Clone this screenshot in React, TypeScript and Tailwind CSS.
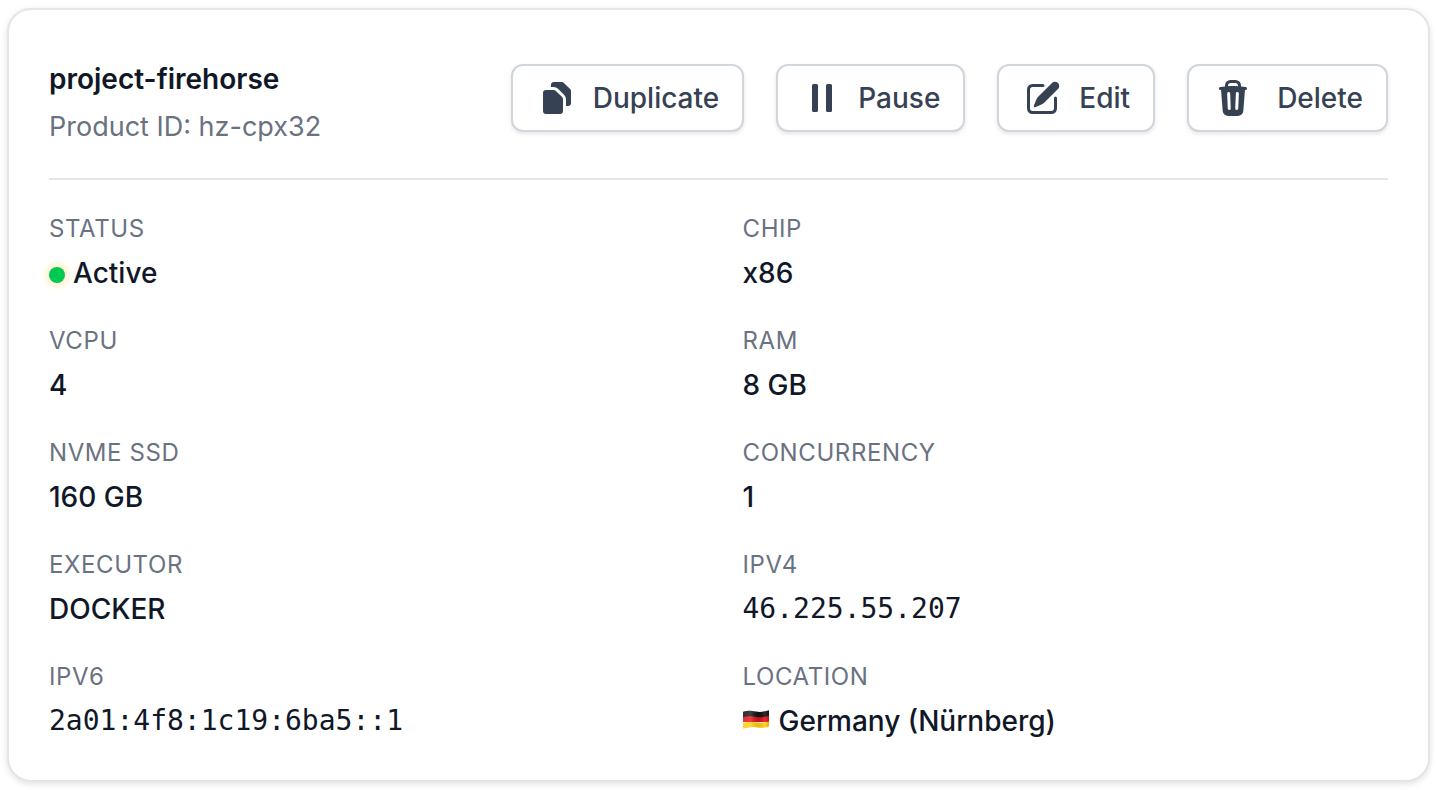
import type { ReactNode } from "react";
import type { IconType } from "react-icons";
import {
  HiMiniDocumentDuplicate,
  HiMiniPause,
  HiMiniPencilSquare,
  HiMiniTrash,
} from "react-icons/hi2";

const SERVER = {
  name: "project-firehorse",
  productId: "hz-cpx32",
};

function ActionButton({
  icon: Icon,
  label,
  gap = "gap-4",
}: {
  icon: IconType;
  label: string;
  gap?: string;
}) {
  return (
    <button
      type="button"
      className={`flex items-center ${gap} rounded-xl border-2 border-gray-300 bg-white py-3 pr-[23px] pl-6 text-[28px] leading-10 font-medium text-gray-700 shadow-[0_2px_4px_rgba(0,0,0,0.1)] hover:bg-gray-50`}
    >
      <Icon className="size-10" aria-hidden="true" />
      {label}
    </button>
  );
}

function Detail({
  label,
  mono = false,
  children,
}: {
  label: string;
  mono?: boolean;
  children: ReactNode;
}) {
  return (
    <div className="flex flex-col gap-2">
      <dt className="text-2xl leading-8 tracking-wide text-gray-500 uppercase">
        {label}
      </dt>
      <dd
        className={
          mono
            ? "font-['DejaVu_Sans_Mono',monospace] text-[28px] leading-10 text-gray-900"
            : "text-[28px] leading-10 font-medium text-gray-900"
        }
      >
        {children}
      </dd>
    </div>
  );
}

function GermanFlag() {
  return (
    <svg
      viewBox="0 0 26 21"
      className="mr-2.5 inline-block h-[21px] w-[26px] align-baseline"
      role="img"
      aria-label="Germany"
    >
      <defs>
        <clipPath id="flag-wave">
          <path d="M0 2.2Q0 1.4 .8 1.4C5 .4 8 .8 13 1.6S21 1.6 25.2.4Q26 .2 26 1V16Q26 16.8 25.2 17C21 18 18 18 13 17.2S5 17.6.8 18.6Q0 18.8 0 18Z" />
        </clipPath>
        <linearGradient id="flag-shade">
          <stop offset="0" stopColor="#fff" stopOpacity="0.12" />
          <stop offset="0.3" stopColor="#fff" stopOpacity="0.2" />
          <stop offset="0.6" stopColor="#000" stopOpacity="0.08" />
          <stop offset="0.85" stopColor="#fff" stopOpacity="0.12" />
          <stop offset="1" stopColor="#000" stopOpacity="0.12" />
        </linearGradient>
      </defs>
      <g clipPath="url(#flag-wave)">
        <path fill="#111" d="M0 0H26V8H0Z" />
        <path
          fill="#e0101a"
          d="M0 7.2C5 6 8 6.2 13 7S21 7.2 26 5.8V12H0Z"
        />
        <path
          fill="#ffcc0a"
          d="M0 13C5 11.8 8 11.8 13 12.4S21 12.6 26 11.4V19H0Z"
        />
        <path fill="url(#flag-shade)" d="M0 0H26V19H0Z" />
      </g>
    </svg>
  );
}

export default function App() {
  return (
    <main className="bg-white pt-2 pr-1.5 pb-2 pl-[7px] font-[Inter,sans-serif]">
      <section className="rounded-3xl border-2 border-[#e5e5e5] bg-white px-10 pt-10 pb-[39px] shadow-[0_2px_6px_rgba(0,0,0,0.12)]">
        <header className="flex flex-wrap items-start justify-between gap-8 border-b-2 border-[#e5e5e5] pb-[31px]">
          <div className="flex flex-col gap-2 pt-[9px] leading-10">
            <h1 className="text-[28px] leading-10 font-semibold text-gray-900">
              {SERVER.name}
            </h1>
            <p className="text-[27px] leading-10 text-gray-500">
              Product ID: {SERVER.productId}
            </p>
          </div>
          <div className="flex flex-wrap gap-8 pt-3.5">
            <ActionButton icon={HiMiniDocumentDuplicate} label="Duplicate" />
            <ActionButton icon={HiMiniPause} label="Pause" />
            <ActionButton icon={HiMiniPencilSquare} label="Edit" />
            <ActionButton icon={HiMiniTrash} label="Delete" gap="gap-6" />
          </div>
        </header>

        <dl className="grid grid-cols-2 gap-x-12 gap-y-8 pt-[33px]">
          <Detail label="Status">
            <span className="mr-2 inline-block size-4 rounded-full bg-green-500 shadow-[0_0_4px_5px_#fef7dc]" />
            Active
          </Detail>
          <Detail label="Chip">x86</Detail>
          <Detail label="vCPU">4</Detail>
          <Detail label="RAM">8 GB</Detail>
          <Detail label="NVMe SSD">160 GB</Detail>
          <Detail label="Concurrency">1</Detail>
          <Detail label="Executor">DOCKER</Detail>
          <Detail label="IPv4" mono>
            46.225.55.207
          </Detail>
          <Detail label="IPv6" mono>
            2a01:4f8:1c19:6ba5::1
          </Detail>
          <Detail label="Location">
            <GermanFlag />
            Germany (Nürnberg)
          </Detail>
        </dl>
      </section>
    </main>
  );
}
